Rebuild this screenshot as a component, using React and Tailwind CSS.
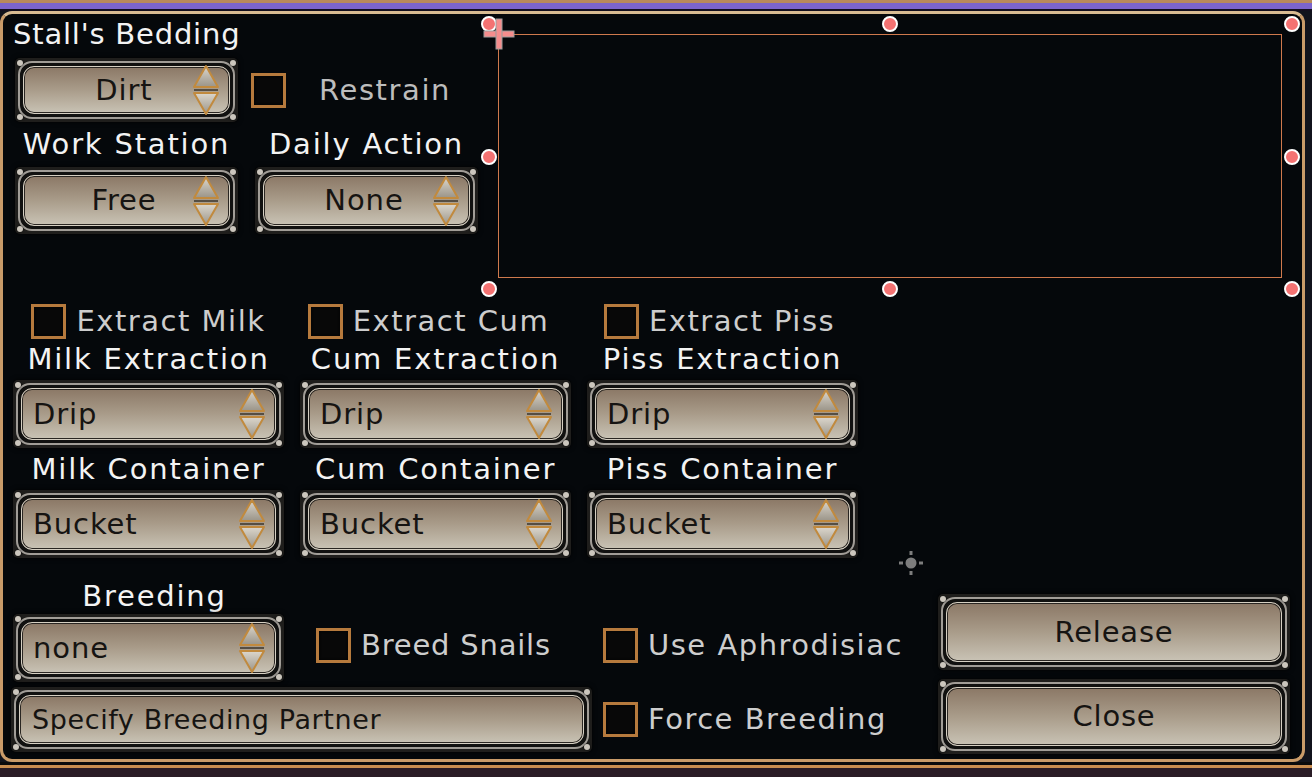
import React from 'react';

function Rivets() {
  return (
    <>
      <span className="absolute left-[2px] top-[2px] h-[6px] w-[6px] rounded-full bg-[#cbc6bd] shadow-[0_0_2px_#000]" />
      <span className="absolute right-[2px] top-[2px] h-[6px] w-[6px] rounded-full bg-[#cbc6bd] shadow-[0_0_2px_#000]" />
      <span className="absolute bottom-[2px] left-[2px] h-[6px] w-[6px] rounded-full bg-[#cbc6bd] shadow-[0_0_2px_#000]" />
      <span className="absolute bottom-[2px] right-[2px] h-[6px] w-[6px] rounded-full bg-[#cbc6bd] shadow-[0_0_2px_#000]" />
    </>
  );
}

function Plate({ className = '', innerClass = '', children }) {
  return (
    <div className={`relative rounded-[5px] bg-[#1f1e1c] p-[3px] shadow-[0_0_5px_rgba(0,0,0,0.9)] ${className}`}>
      <div className="h-full rounded-[14px] border-2 border-[#a19d97] bg-[#111110] p-[3px]">
        <div className={`flex h-full items-center rounded-[11px] border border-[#d6d0c3] bg-gradient-to-b from-[#8b7866] via-[#a99c8a] to-[#c9c3b5] text-[#161412] shadow-[inset_0_0_0_1px_#2a2622] ${innerClass}`}>
          {children}
        </div>
      </div>
      <Rivets />
    </div>
  );
}

function Arrows() {
  return (
    <svg width="30" height="52" viewBox="0 0 30 52" className="shrink-0">
      <defs>
        <linearGradient id="arrowFill" x1="0" y1="0" x2="0" y2="1">
          <stop offset="0" stopColor="#dcd7cd" />
          <stop offset="1" stopColor="#9a9488" />
        </linearGradient>
      </defs>
      <polygon points="15,2 27,23 3,23" fill="url(#arrowFill)" stroke="#c18a3e" strokeWidth="2" strokeLinejoin="round" />
      <line x1="3" y1="26" x2="27" y2="26" stroke="#3a342c" strokeWidth="1.5" />
      <polygon points="3,29 27,29 15,50" fill="url(#arrowFill)" stroke="#c18a3e" strokeWidth="2" strokeLinejoin="round" />
    </svg>
  );
}

function Select({ value, center = false, className = '' }) {
  return (
    <Plate className={className} innerClass="pl-[11px] pr-[8px]">
      <span className={`flex-1 text-[29px] leading-none tracking-[0.9px] ${center ? 'text-center pl-[22px]' : ''}`}>{value}</span>
      <Arrows />
    </Plate>
  );
}

function Box({ className = '' }) {
  return (
    <div className={`h-[35px] w-[35px] shrink-0 border-[3px] border-[#b67a3d] bg-[#080808] shadow-[inset_0_0_3px_#000] ${className}`} />
  );
}

function Check({ label, className = '', tracking = 'tracking-[1.5px]' }) {
  return (
    <div className={`flex items-center ${className}`}>
      <Box />
      <span className={`ml-[10px] text-[29px] leading-none text-[#cdcdcd] ${tracking}`}>{label}</span>
    </div>
  );
}

function Label({ children, className = '' }) {
  return (
    <div className={`h-[32px] text-center text-[29px] leading-[32px] tracking-[1.8px] text-[#f3f3f3] ${className}`}>
      {children}
    </div>
  );
}

function Handle({ className }) {
  return <span className={`absolute h-[16px] w-[16px] rounded-full border-2 border-white bg-[#f47272] ${className}`} />;
}

export default function App() {
  return (
    <div className="relative flex h-[777px] w-[1312px] flex-col overflow-hidden bg-[#11131c] font-['DejaVu_Sans',sans-serif]">
      <div className="h-[3px] bg-[#b8895a]" />
      <div className="h-[6px] bg-[#7b64cb]" />
      <div className="h-[2px] bg-[#140f1e]" />

      <div className="h-[751px] w-[1305px] rounded-[12px] border-[3px] border-[#c99b69] border-t-[#d8bb92] bg-[#05080b]">
        {/* top section */}
        <div className="flex">
          <div className="w-[475px]">
            <div className="ml-[10px] mt-[4px] text-[29px] leading-[32px] tracking-[0.8px] text-[#f3f3f3]">Stall's Bedding</div>
            <div className="mt-[8px] flex items-center">
              <Select value="Dirt" center className="ml-[12px] h-[64px] w-[223px]" />
              <Box className="ml-[13px]" />
              <span className="ml-[33px] text-[29px] leading-none tracking-[1.6px] text-[#bdbdbd]">Restrain</span>
            </div>
            <div className="mt-[6px] flex">
              <Label className="ml-[12px] w-[223px]">Work Station</Label>
              <Label className="ml-[17px] w-[223px]">Daily Action</Label>
            </div>
            <div className="mt-[7px] flex">
              <Select value="Free" center className="ml-[12px] h-[67px] w-[223px]" />
              <Select value="None" center className="ml-[17px] h-[67px] w-[223px]" />
            </div>
          </div>

          <div className="relative ml-[20px] mt-[20px] h-[244px] w-[784px] border-[1.5px] border-[#cf794d]">
            <Handle className="-left-[18px] -top-[19px]" />
            <Handle className="left-[383px] -top-[19px]" />
            <Handle className="left-[785px] -top-[19px]" />
            <Handle className="-left-[18px] top-[114px]" />
            <Handle className="left-[785px] top-[114px]" />
            <Handle className="-left-[18px] top-[246px]" />
            <Handle className="left-[383px] top-[246px]" />
            <Handle className="left-[785px] top-[246px]" />
            <svg width="32" height="32" viewBox="0 0 32 32" className="absolute -left-[16px] -top-[17px]">
              <rect x="1" y="13" width="30" height="6" fill="#f58d8d" stroke="#9c9c9c" strokeWidth="1" />
              <rect x="13" y="1" width="6" height="30" fill="#f58d8d" stroke="#9c9c9c" strokeWidth="1" />
              <rect x="14" y="14" width="4" height="4" fill="#f58d8d" />
            </svg>
          </div>
        </div>

        {/* extraction section */}
        <div className="ml-[10px] mt-[25px] grid grid-cols-[271px_271px_271px] gap-x-[16px]">
          <Check label="Extract Milk" className="h-[36px] justify-center" />
          <Check label="Extract Cum" className="h-[36px] justify-center pr-[14px]" />
          <Check label="Extract Piss" className="h-[36px] justify-center pr-[6px]" />

          <Label className="mt-[4px]">Milk Extraction</Label>
          <Label className="mt-[4px]">Cum Extraction</Label>
          <Label className="mt-[4px]">Piss Extraction</Label>

          <Select value="Drip" className="mt-[5px] h-[68px]" />
          <Select value="Drip" className="mt-[5px] h-[68px]" />
          <Select value="Drip" className="mt-[5px] h-[68px]" />

          <Label className="mt-[5px]">Milk Container</Label>
          <Label className="mt-[5px]">Cum Container</Label>
          <Label className="mt-[5px]">Piss Container</Label>

          <Select value="Bucket" className="mt-[5px] h-[68px]" />
          <Select value="Bucket" className="mt-[5px] h-[68px]" />
          <Select value="Bucket" className="mt-[5px] h-[68px]" />
        </div>

        {/* breeding section */}
        <div className="mt-[22px] flex">
          <div className="ml-[8px] w-[581px]">
            <div className="flex">
              <div className="ml-[2px] w-[271px]">
                <Label className="h-[30px] pl-[12px] leading-[30px]">Breeding</Label>
                <Select value="none" className="mt-[2px] h-[68px]" />
              </div>
              <Check label="Breed Snails" className="ml-[32px] mt-[47px] h-[36px] self-start" tracking="tracking-[0.8px]" />
            </div>
            <Plate className="mt-[5px] h-[65px] w-[581px]" innerClass="pl-[12px]">
              <span className="text-[27px] leading-none tracking-[0.6px]">Specify Breeding Partner</span>
            </Plate>
          </div>

          <div className="ml-[11px] flex flex-col">
            <Check label="Use Aphrodisiac" className="mt-[47px] h-[36px]" />
            <Check label="Force Breeding" className="mt-[38px] h-[36px]" />
          </div>

          <div className="ml-auto mr-[12px] mt-[14px] w-[352px]">
            <Plate className="h-[76px]" innerClass="justify-center">
              <span className="text-[29px] leading-none tracking-[0.8px]">Release</span>
            </Plate>
            <Plate className="mt-[9px] h-[75px]" innerClass="justify-center">
              <span className="text-[29px] leading-none tracking-[0.8px]">Close</span>
            </Plate>
          </div>
        </div>
      </div>

      <div className="h-[3px] bg-[#0a0a0c]" />
      <div className="h-[3px] bg-[#c98d50]" />
      <div className="flex-1 bg-[#2a1c26]" />

      {/* pivot marker */}
      <svg width="24" height="24" viewBox="0 0 24 24" className="absolute left-[899px] top-[551px]">
        <circle cx="12" cy="12" r="5.5" fill="#7d7d7d" />
        <rect x="10.5" y="0" width="3" height="4" fill="#7d7d7d" />
        <rect x="10.5" y="20" width="3" height="4" fill="#7d7d7d" />
        <rect x="0" y="10.5" width="4" height="3" fill="#7d7d7d" />
        <rect x="20" y="10.5" width="4" height="3" fill="#7d7d7d" />
      </svg>
    </div>
  );
}
